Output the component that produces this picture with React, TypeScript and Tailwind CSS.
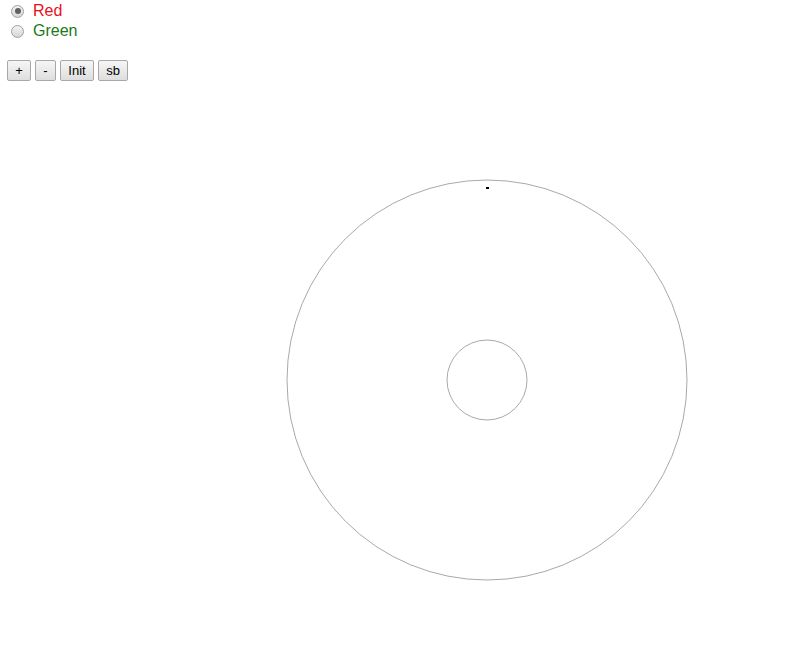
import React from "react";

function Radio({ checked }: { checked?: boolean }) {
  return (
    <span className="relative inline-flex h-[13px] w-[13px] items-center justify-center rounded-full border border-[#a0a0a0] bg-gradient-to-b from-[#f4f4f4] to-[#d6d6d6]">
      {checked && <span className="h-[6px] w-[6px] rounded-full bg-[#606060]" />}
    </span>
  );
}

function Btn({ label, w }: { label: string; w: string }) {
  return (
    <button
      className={`flex h-[21px] ${w} items-center justify-center rounded-[2px] border border-[#a8a8a8] bg-gradient-to-b from-[#f6f6f6] to-[#dedede] text-[13px] leading-none text-black`}
    >
      {label}
    </button>
  );
}

export default function App() {
  return (
    <div className="min-h-[668px] w-[796px] bg-white font-['Liberation_Sans',Arial,sans-serif]">
      <div className="flex flex-col pl-[11px] pt-[1px]">
        <label className="flex h-[20px] items-center gap-[9px]">
          <Radio checked />
          <span className="text-[16px] text-[#e8101a]">Red</span>
        </label>
        <label className="flex h-[20px] items-center gap-[9px]">
          <Radio />
          <span className="text-[16px] text-[#187a18]">Green</span>
        </label>
      </div>
      <div className="mt-[19px] flex gap-[4px] pl-[7px]">
        <Btn label="+" w="w-[24px]" />
        <Btn label="-" w="w-[21px]" />
        <Btn label="Init" w="w-[34px]" />
        <Btn label="sb" w="w-[30px]" />
      </div>
      <svg width="796" height="587" className="block">
        <circle cx="487" cy="299" r="200" fill="none" stroke="#a9a9a9" strokeWidth="1" />
        <circle cx="487" cy="299" r="40" fill="none" stroke="#a9a9a9" strokeWidth="1" />
        <rect x="486" y="106" width="3" height="2" fill="#000" />
      </svg>
    </div>
  );
}
